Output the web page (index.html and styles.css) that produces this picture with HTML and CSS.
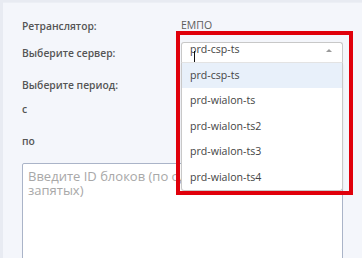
FILE: index.html
```html
<!DOCTYPE html>
<html lang="ru">
<head>
<meta charset="utf-8">
<link rel="stylesheet" href="styles.css">
</head>
<body>
<div class="page">
  <div class="form">
    <div class="row row-relay">
      <div class="label">Ретранслятор:</div>
      <div class="value">ЕМПО</div>
    </div>
    <div class="row row-server">
      <div class="label">Выберите сервер:</div>
      <div class="select-wrap">
        <div class="select">
          <span class="select-text">prd-csp-ts</span>
          <span class="caret-line"></span>
          <span class="arrow"></span>
        </div>
        <ul class="options">
          <li class="option active">prd-csp-ts</li>
          <li class="option">prd-wialon-ts</li>
          <li class="option">prd-wialon-ts2</li>
          <li class="option">prd-wialon-ts3</li>
          <li class="option">prd-wialon-ts4</li>
        </ul>
        <div class="highlight"></div>
      </div>
    </div>
    <div class="row row-period">
      <div class="label">Выберите период:</div>
    </div>
    <div class="row row-from">
      <div class="label">с</div>
    </div>
    <div class="row row-to">
      <div class="label">по</div>
    </div>
    <textarea class="ids" placeholder="Введите ID блоков (по одному или через запятых)"></textarea>
  </div>
</div>
</body>
</html>
```

FILE: styles.css
```css
html, body {
  margin: 0;
  padding: 0;
  height: 100%;
  overflow: hidden;
}
body {
  background: #e8ebf2;
  font-family: "Open Sans", "Noto Sans", sans-serif;
}
.page {
  margin-left: 3px;
  margin-top: 2px;
  height: 100%;
  background: #f4f6fb;
  border-top: 1px solid #eceff5;
}
.form {
  padding-left: 19px;
  padding-top: 15px;
  display: flex;
  flex-direction: column;
}
.row {
  display: flex;
  align-items: center;
  height: 16px;
}
.label {
  width: 159px;
  flex: none;
  font-size: 10.3px;
  font-weight: 600;
  color: #555;
  line-height: 16px;
}
.value {
  font-size: 10.5px;
  color: #5c5c5c;
  line-height: 16px;
  margin-top: -3px;
}
.row-server {
  margin-top: 8px;
  height: 20px;
  align-items: flex-start;
}
.row-server .label {
  margin-top: 3px;
}
.row-period { margin-top: 15px; }
.row-from { margin-top: 8px; }
.row-to { margin-top: 16px; }
.select-wrap {
  position: relative;
  width: 162px;
  height: 20px;
  z-index: 2;
}
.select {
  position: relative;
  box-sizing: border-box;
  height: 20px;
  background: #fff;
  border: 1px solid #c8c8c8;
  border-bottom: none;
  border-radius: 3px 3px 0 0;
  padding-left: 8px;
  font-size: 10.6px;
  color: #444;
  line-height: 12px;
}
.select-text {
  position: relative;
  top: 0;
}
.caret-line {
  position: absolute;
  left: 12px;
  top: 8px;
  width: 1px;
  height: 11px;
  background: #111;
}
.arrow {
  position: absolute;
  right: 10px;
  top: 6px;
  width: 0;
  height: 0;
  border-left: 3.5px solid transparent;
  border-right: 3.5px solid transparent;
  border-bottom: 3px solid #9a9a9a;
}
.options {
  list-style: none;
  margin: 0;
  padding: 0;
  box-sizing: border-box;
  width: 162px;
  background: #fff;
  border: 1px solid #c8c8c8;
  border-top: 1px solid #e3e3e3;
  border-radius: 0 0 3px 3px;
  box-shadow: 0 2px 3px rgba(0,0,0,0.08);
}
.option {
  height: 25.4px;
  line-height: 25.4px;
  padding-left: 8px;
  font-size: 10.6px;
  color: #444;
}
.option.active {
  background: #e8f0fa;
}
.highlight {
  position: absolute;
  left: -5px;
  top: -11px;
  width: 177px;
  height: 164px;
  box-sizing: border-box;
  border: 4px solid #e0000b;
  pointer-events: none;
}
.ids {
  margin-top: 14px;
  width: 321px;
  height: 130px;
  box-sizing: border-box;
  border: 1px solid #aab4c8;
  border-radius: 2px;
  background: #fff;
  padding: 6px 5px;
  font-family: "Open Sans", "Noto Sans", sans-serif;
  font-size: 13px;
  line-height: 13.5px;
  resize: none;
  outline: none;
}
.ids::placeholder {
  color: #a8a8a8;
}
```
